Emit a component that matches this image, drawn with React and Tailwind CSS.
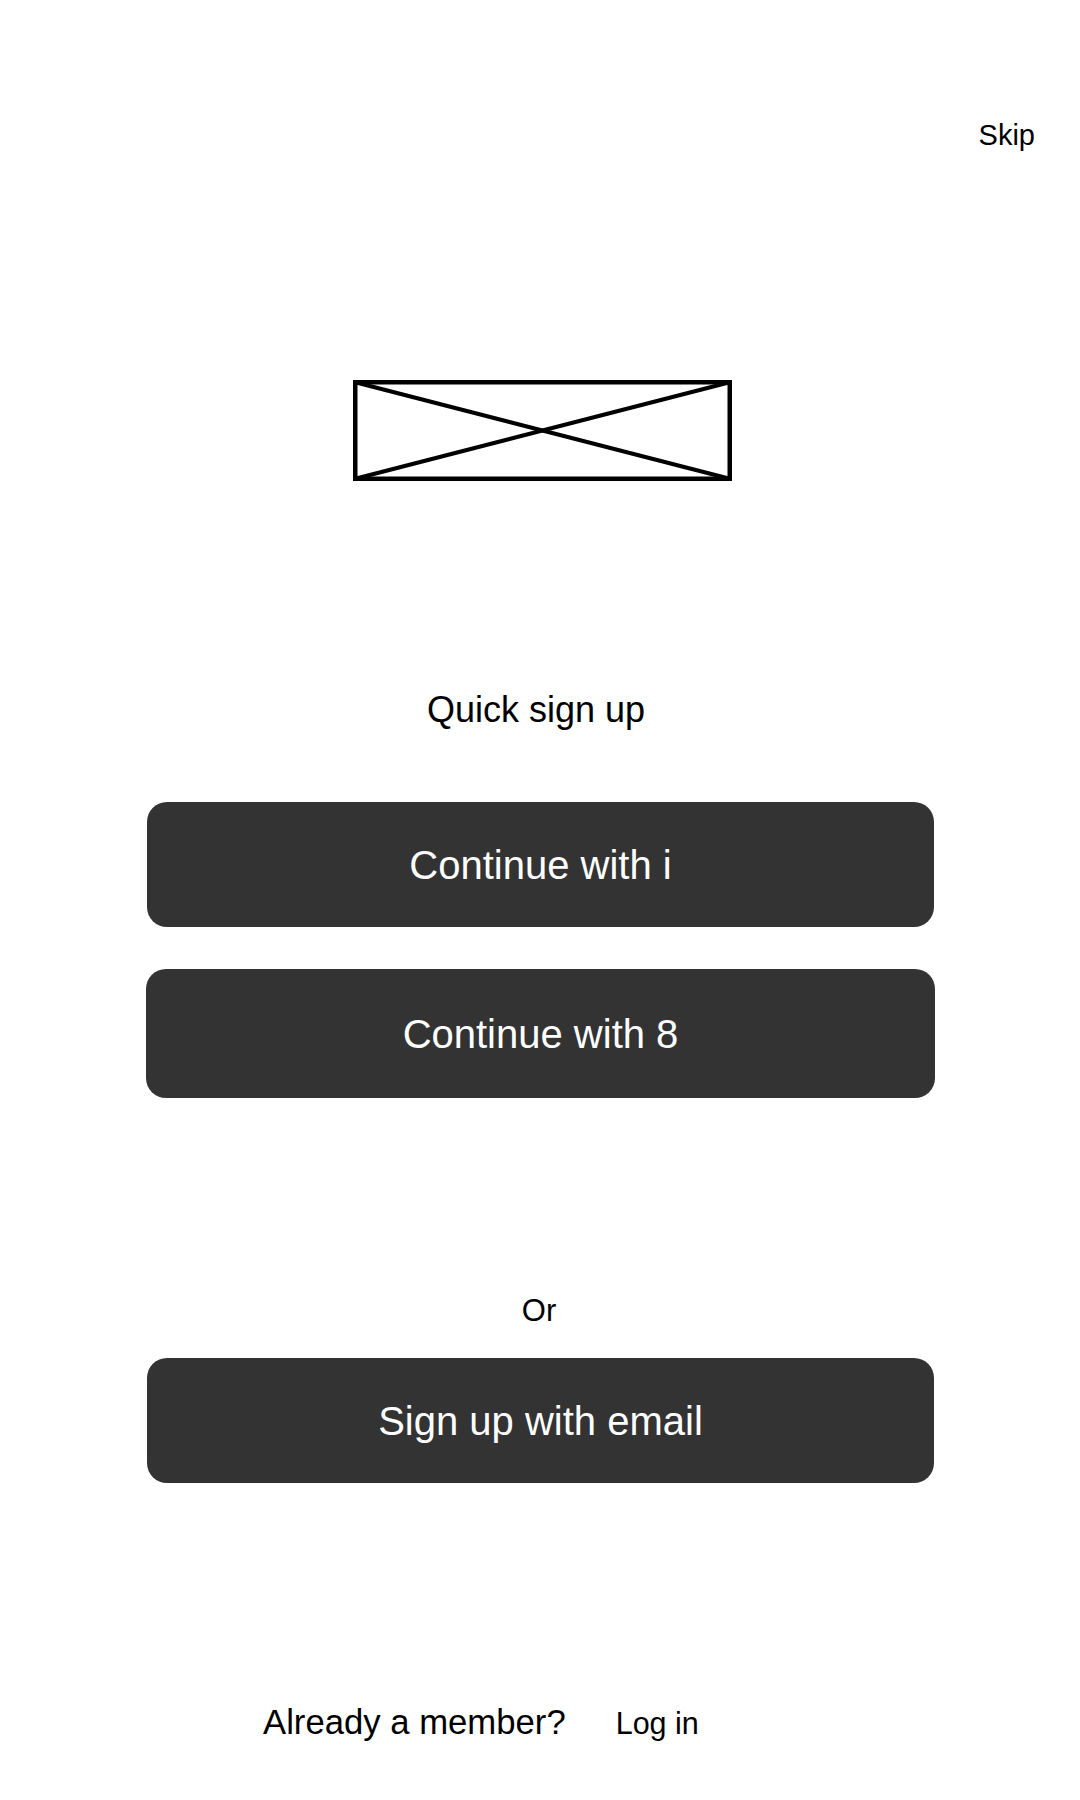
export default function App() {
  return (
    <div className="w-[1080px] min-h-[1800px] bg-white text-black font-['Liberation_Sans',Arial,sans-serif]">
      <div className="flex justify-end pr-[45px] pt-[121px]">
        <span className="text-[29px] leading-[28px]">Skip</span>
      </div>

      <div className="flex pl-[353px] mt-[231px]">
        <svg width="379" height="101" viewBox="0 0 379 101" className="block">
          <rect x="2.25" y="2.25" width="374.5" height="96.5" fill="none" stroke="#000" strokeWidth="4.5" />
          <line x1="2.25" y1="2.25" x2="376.75" y2="98.75" stroke="#000" strokeWidth="4" />
          <line x1="2.25" y1="98.75" x2="376.75" y2="2.25" stroke="#000" strokeWidth="4" />
        </svg>
      </div>

      <div className="flex justify-center pr-[8px] mt-[211px]">
        <span className="text-[36px] leading-[36px]">Quick sign up</span>
      </div>

      <div className="flex pl-[147px] mt-[74px]">
        <button className="w-[787px] h-[125px] rounded-[20px] bg-[#333333] text-white text-[40px] leading-none flex items-center justify-center">
          Continue with i
        </button>
      </div>

      <div className="flex pl-[146px] mt-[42px]">
        <button className="w-[789px] h-[129px] rounded-[20px] bg-[#333333] text-white text-[40px] leading-none flex items-center justify-center">
          Continue with 8
        </button>
      </div>

      <div className="flex justify-center pr-[2px] mt-[198px]">
        <span className="text-[31px] leading-[30px]">Or</span>
      </div>

      <div className="flex pl-[147px] mt-[32px]">
        <button className="w-[787px] h-[125px] rounded-[20px] bg-[#333333] text-white text-[40px] leading-none flex items-center justify-center">
          Sign up with email
        </button>
      </div>

      <div className="flex items-baseline pl-[263px] mt-[222px]">
        <span className="text-[34.7px] leading-[35px]">Already a member?</span>
        <span className="ml-[50px] text-[30.5px] leading-[35px]">Log in</span>
      </div>
    </div>
  );
}
